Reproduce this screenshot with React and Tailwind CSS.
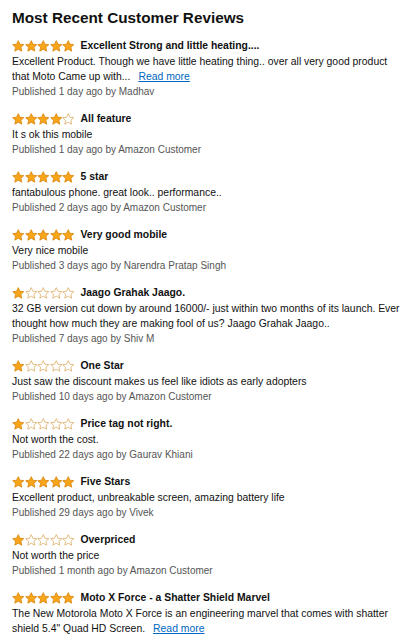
const reviews = [
  {
    rating: 5,
    title: 'Excellent Strong and little heating....',
    body: 'Excellent Product. Though we have little heating thing.. over all very good product that Moto Came up with...',
    more: true,
    meta: 'Published 1 day ago by Madhav',
  },
  { rating: 4, title: 'All feature', body: 'It s ok this mobile', meta: 'Published 1 day ago by Amazon Customer' },
  { rating: 5, title: '5 star', body: 'fantabulous phone. great look.. performance..', meta: 'Published 2 days ago by Amazon Customer' },
  { rating: 5, title: 'Very good mobile', body: 'Very nice mobile', meta: 'Published 3 days ago by Narendra Pratap Singh' },
  {
    rating: 1,
    title: 'Jaago Grahak Jaago.',
    body: '32 GB version cut down by around 16000/- just within two months of its launch. Ever thought how much they are making fool of us? Jaago Grahak Jaago..',
    meta: 'Published 7 days ago by Shiv M',
  },
  { rating: 1, title: 'One Star', body: 'Just saw the discount makes us feel like idiots as early adopters', meta: 'Published 10 days ago by Amazon Customer' },
  { rating: 1, title: 'Price tag not right.', body: 'Not worth the cost.', meta: 'Published 22 days ago by Gaurav Khiani' },
  { rating: 5, title: 'Five Stars', body: 'Excellent product, unbreakable screen, amazing battery life', meta: 'Published 29 days ago by Vivek' },
  { rating: 1, title: 'Overpriced', body: 'Not worth the price', meta: 'Published 1 month ago by Amazon Customer' },
  {
    rating: 5,
    title: 'Moto X Force - a Shatter Shield Marvel',
    body: 'The New Motorola Moto X Force is an engineering marvel that comes with shatter shield 5.4" Quad HD Screen.',
    more: true,
  },
];

const Star = ({ filled }) => (
  <svg width="12.5" height="12" viewBox="0 0 24 23" className="shrink-0">
    <path
      d="M12 1.2l3.2 6.9 7.4.8-5.5 5.1 1.5 7.4L12 17.6l-6.6 3.8 1.5-7.4L1.4 8.9l7.4-.8z"
      fill={filled ? '#f9a51a' : '#ffffff'}
      stroke={filled ? '#d9850c' : '#ddb06a'}
      strokeWidth="1.6"
      strokeLinejoin="round"
    />
  </svg>
);

const Stars = ({ rating }) => (
  <div className="flex items-center">
    {[1, 2, 3, 4, 5].map((i) => (
      <Star key={i} filled={i <= rating} />
    ))}
  </div>
);

const App = () => {
  return (
    <div className="min-h-screen bg-white pl-3 pr-[6px] pt-2 text-[#111]" style={{ fontFamily: '"Liberation Sans", Arial, sans-serif' }}>
      <h2 className="text-[15.3px] font-bold leading-[20px]">Most Recent Customer Reviews</h2>

      <div className="mt-[10px]">
        {reviews.map((r) => (
          <div key={r.title} className="mb-3">
            <div className="flex h-4 items-center gap-[6px]">
              <Stars rating={r.rating} />
              <span className="text-[10.4px] font-bold">{r.title}</span>
            </div>
            <p className="text-[10.4px] leading-[15px]">
              {r.body}
              {r.more && (
                <a href="#" className="ml-2 inline-block text-[#0066c0] underline">
                  Read more
                </a>
              )}
            </p>
            {r.meta && <p className="text-[10px] leading-[15px] text-[#555]">{r.meta}</p>}
          </div>
        ))}
      </div>
    </div>
  );
};

export default App;
